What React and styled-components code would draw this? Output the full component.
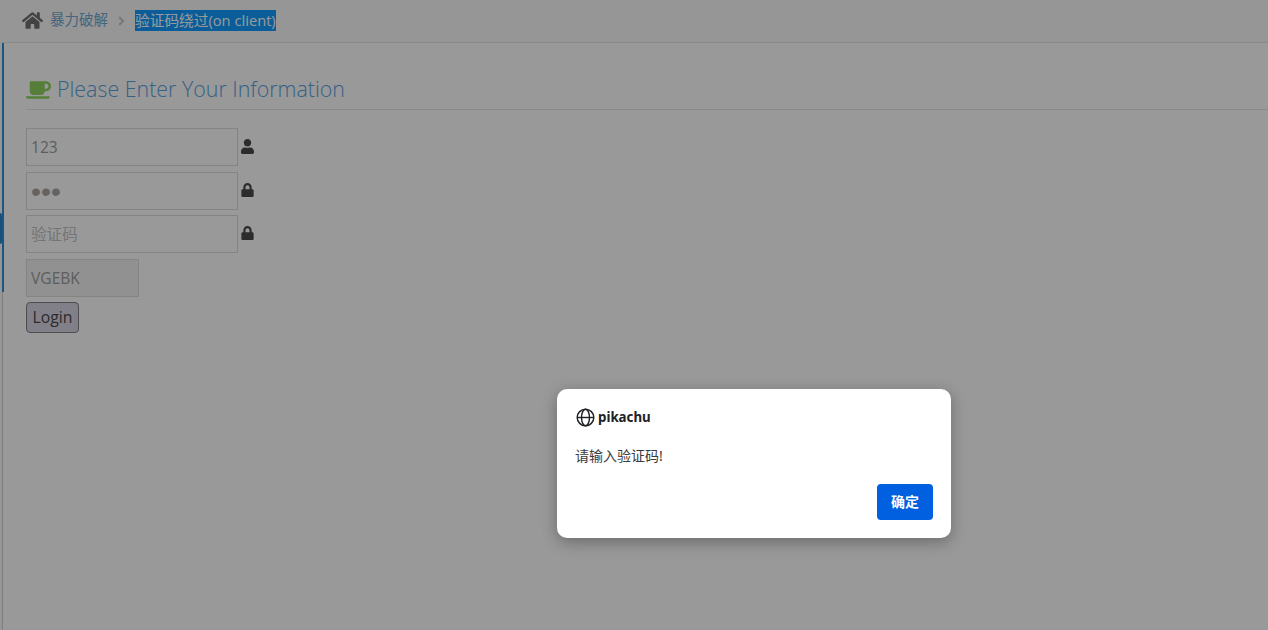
import React from "react";
import styled, { createGlobalStyle } from "styled-components";
import { FaHome, FaCoffee, FaUser, FaLock, FaAngleRight } from "react-icons/fa";

const Global = createGlobalStyle`
  html, body { margin: 0; padding: 0; height: 100%; overflow: hidden; background: #fff; }
  #root { height: 100%; }
  * { box-sizing: border-box; }
  input::placeholder { color: #c4c4c4; opacity: 1; }
`;
const Page = styled.div`
  position: relative; height: 630px; display: flex; overflow: hidden;
  font-family: "Open Sans", "Noto Sans CJK SC", sans-serif; color: #393939;
`;
const Rail = styled.div`
  position: relative; width: 2px; flex: none; background: #fbfbfb;
`;
const Bump = styled.div`
  position: absolute; left: 0; top: 213px; width: 2px; height: 31px; background: #2a86c8; border-radius: 0 2px 2px 0;
`;
const Main = styled.div`
  flex: 1; min-width: 0; border-left: 1px solid #d0d0d0;
`;
const Breadcrumbs = styled.div`
  height: 43px; background: #fafafa; border-bottom: 1px solid #e5e5e5;
  display: flex; align-items: center; padding-left: 20px; padding-bottom: 2px; font-size: 14.7px; margin-left: -1px;
`;
const HomeIcon = styled(FaHome)`
  width: 21px; height: 19px; color: #707070; margin-right: 7px; margin-top: 0;
`;
const Crumb = styled.a`
  color: #72a8d0; line-height: 20px; font-size: 14.5px;
`;
const Sep = styled(FaAngleRight)`
  color: #c4c8d0; margin: 2px 8px 0 8px; width: 11px; height: 14px; flex: none;
`;
const Selected = styled.span`
  background: #119cff; color: #fff; line-height: 21px; height: 21px; display: inline-block; white-space: nowrap;
`;
const Content = styled.div`
  height: 249px; border-left: 2px solid #2f8fd6; margin-left: -1px; padding: 0 0 0 22px; position: relative;
`;
const Heading = styled.h1`
  margin: 0; padding-top: 25px; height: 67px; border-bottom: 1px solid #e6e6e6;
  display: flex; align-items: center; gap: 6px;
  font-size: 21.4px; font-weight: 300; color: #5aa2e0; line-height: 30px;
`;
const Cup = styled(FaCoffee)`
  width: 25px; height: 22px; color: #8ed45e; margin-top: 2px;
`;
const Form = styled.form`
  display: flex; flex-direction: column; padding-top: 18px;
`;
const Row = styled.div`
  display: flex; align-items: center; gap: 3px; height: 38px; margin-bottom: ${p => p.$mb ?? 6}px;
`;
const Input = styled.input`
  width: ${p => p.$w || 212}px; height: 38px; border: 1px solid #dcdcdc; background: ${p => p.$bg || "#fff"};
  padding: 0 4px 1px; font: 400 15.6px "Open Sans", "Noto Sans CJK SC", sans-serif; color: #9c9c9c; outline: none; margin: 0;
`;
const SecretInput = styled(Input)`
  font: 400 28.5px "Liberation Sans", sans-serif; color: #a6a6a6; padding: 0 4px;
`;
const Glyph = styled.span`
  display: flex; color: #4a4a4a; margin-top: ${p => p.$top ?? -2}px;
  svg { width: 13px; height: ${p => p.$h || 14}px; }
`;
const Button = styled.button`
  width: 53px; height: 31px; padding: 0 0 2px; margin: 0; border: 1px solid #808080; border-radius: 4px;
  background: #d8d6e4; color: #484848; font: 400 15.8px "Open Sans", sans-serif;
`;
const Overlay = styled.div`
  position: absolute; inset: 0; background: rgba(0,0,0,.4);
`;
const Dialog = styled.div`
  position: absolute; left: 557px; top: 389px; width: 394px; height: 149px; background: #fff; border-radius: 10px;
  box-shadow: 0 4px 16px rgba(0,0,0,.3); padding: 19px 18px 18px; display: flex; flex-direction: column;
  font-family: "Noto Sans", "Noto Sans CJK SC", sans-serif;
`;
const DialogHead = styled.div`
  display: flex; align-items: center; gap: 3px; height: 18px; font-size: 13.3px; font-weight: 700; color: #202124; line-height: 18px; margin-left: 1px;
`;
const Message = styled.div`
  margin-top: 20px; font-size: 14px; line-height: 20px; color: #3a3a3c; letter-spacing: 0;
`;
const Actions = styled.div`
  display: flex; justify-content: flex-end; margin-top: auto;
`;
const Ok = styled.button`
  width: 56px; height: 36px; border: 0; border-radius: 4px; background: #0060df; color: #fff;
  font: 700 14px "Noto Sans", "Noto Sans CJK SC", sans-serif; padding: 0 0 2px;
`;

export default function App() {
  return (
    <Page>
      <Global />
      <Rail><Bump /></Rail>
      <Main>
        <Breadcrumbs>
          <HomeIcon />
          <Crumb>暴力破解</Crumb>
          <Sep />
          <Selected>验证码绕过(on client)</Selected>
        </Breadcrumbs>
        <Content>
          <Heading><Cup />Please Enter Your Information</Heading>
          <Form>
            <Row><Input defaultValue="123" /><Glyph $h={15} $top={-1}><FaUser /></Glyph></Row>
            <Row $mb={5}><SecretInput type="password" defaultValue="123" /><Glyph><FaLock /></Glyph></Row>
            <Row><Input placeholder="验证码" /><Glyph><FaLock /></Glyph></Row>
            <Row $mb={5}><Input $w={113} $bg="#f2f2f2" defaultValue="VGEBK" /></Row>
            <Button type="button">Login</Button>
          </Form>
        </Content>
      </Main>
      <Overlay />
      <Dialog>
        <DialogHead>
          <svg width="19" height="19" viewBox="0 0 24 24" fill="none" stroke="#202124" strokeWidth="1.8">
            <circle cx="12" cy="12" r="10.5" />
            <ellipse cx="12" cy="12" rx="5" ry="10.5" />
            <path d="M1.5 12h21" />
          </svg>
          pikachu
        </DialogHead>
        <Message>请输入验证码!</Message>
        <Actions><Ok type="button">确定</Ok></Actions>
      </Dialog>
    </Page>
  );
}
